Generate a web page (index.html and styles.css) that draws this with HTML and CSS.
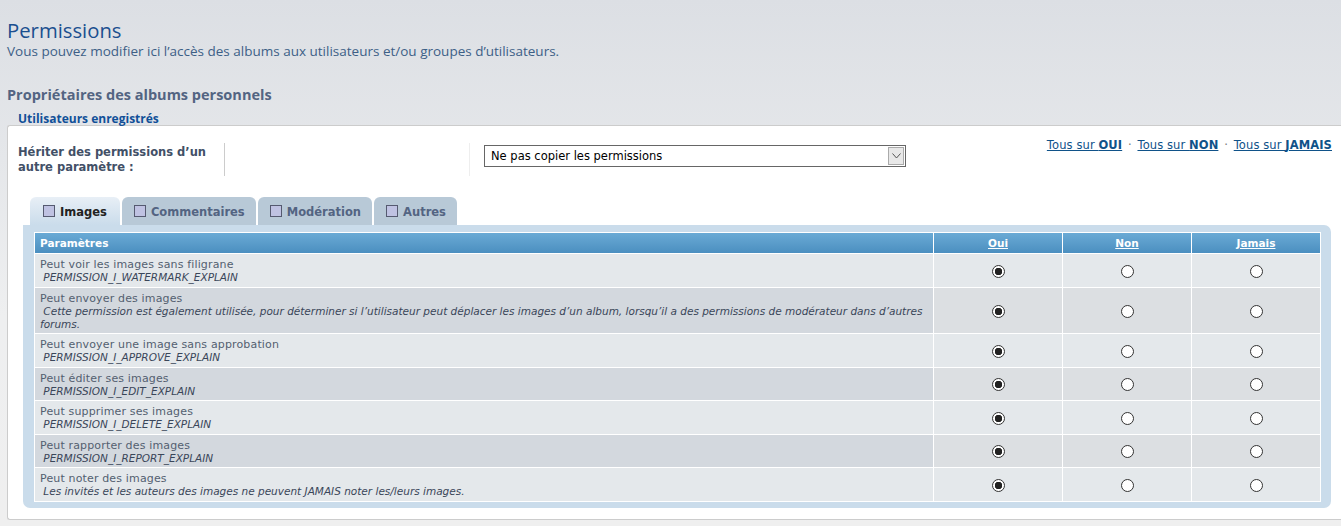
FILE: index.html
```html
<!DOCTYPE html>
<html>
<head>
    <title>Permissions</title>
    <link rel="stylesheet" href="styles.css">
</head>
<body>
    <h1>Permissions</h1>
    <p class="intro">Vous pouvez modifier ici l’accès des albums aux utilisateurs et/ou groupes d’utilisateurs.</p>

    <h2>Propriétaires des albums personnels</h2>
    <div class="legend">Utilisateurs enregistrés</div>

    <div class="panel">
        <div class="inherit">
            <div class="inherit-label">Hériter des permissions d’un autre paramètre :</div>
            <div class="inherit-field">
                <div class="select">
                    <span class="select-text">Ne pas copier les permissions</span>
                    <span class="select-arrow">
                        <svg width="9" height="6" viewBox="0 0 9 6"><path d="M0.5 0.5 L4.5 5 L8.5 0.5" fill="none" stroke="#555" stroke-width="1"/></svg>
                    </span>
                </div>
            </div>
            <div class="all-links">
                <a href="#">Tous sur <b>OUI</b></a> <span class="dot">·</span>
                <a href="#">Tous sur <b>NON</b></a> <span class="dot">·</span>
                <a href="#">Tous sur <b>JAMAIS</b></a>
            </div>
        </div>

        <ul class="tabs">
            <li class="tab active"><span class="box"></span>Images</li>
            <li class="tab"><span class="box"></span>Commentaires</li>
            <li class="tab"><span class="box"></span>Modération</li>
            <li class="tab"><span class="box"></span>Autres</li>
        </ul>

        <div class="tab-body">
            <table class="perms">
                <thead>
                    <tr>
                        <th class="param">Paramètres</th>
                        <th><a href="#">Oui</a></th>
                        <th><a href="#">Non</a></th>
                        <th><a href="#">Jamais</a></th>
                    </tr>
                </thead>
                <tbody>
                    <tr class="row1">
                        <td class="param">Peut voir les images sans filigrane<br><i>&nbsp;PERMISSION_I_WATERMARK_EXPLAIN</i></td>
                        <td><input type="radio" name="p1" checked></td>
                        <td><input type="radio" name="p1"></td>
                        <td><input type="radio" name="p1"></td>
                    </tr>
                    <tr class="row2">
                        <td class="param">Peut envoyer des images<br><i>&nbsp;Cette permission est également utilisée, pour déterminer si l’utilisateur peut déplacer les images d’un album, lorsqu’il a des permissions de modérateur dans d’autres forums.</i></td>
                        <td><input type="radio" name="p2" checked></td>
                        <td><input type="radio" name="p2"></td>
                        <td><input type="radio" name="p2"></td>
                    </tr>
                    <tr class="row1">
                        <td class="param">Peut envoyer une image sans approbation<br><i>&nbsp;PERMISSION_I_APPROVE_EXPLAIN</i></td>
                        <td><input type="radio" name="p3" checked></td>
                        <td><input type="radio" name="p3"></td>
                        <td><input type="radio" name="p3"></td>
                    </tr>
                    <tr class="row2">
                        <td class="param">Peut éditer ses images<br><i>&nbsp;PERMISSION_I_EDIT_EXPLAIN</i></td>
                        <td><input type="radio" name="p4" checked></td>
                        <td><input type="radio" name="p4"></td>
                        <td><input type="radio" name="p4"></td>
                    </tr>
                    <tr class="row1">
                        <td class="param">Peut supprimer ses images<br><i>&nbsp;PERMISSION_I_DELETE_EXPLAIN</i></td>
                        <td><input type="radio" name="p5" checked></td>
                        <td><input type="radio" name="p5"></td>
                        <td><input type="radio" name="p5"></td>
                    </tr>
                    <tr class="row2">
                        <td class="param">Peut rapporter des images<br><i>&nbsp;PERMISSION_I_REPORT_EXPLAIN</i></td>
                        <td><input type="radio" name="p6" checked></td>
                        <td><input type="radio" name="p6"></td>
                        <td><input type="radio" name="p6"></td>
                    </tr>
                    <tr class="row1">
                        <td class="param">Peut noter des images<br><i>&nbsp;Les invités et les auteurs des images ne peuvent JAMAIS noter les/leurs images.</i></td>
                        <td><input type="radio" name="p7" checked></td>
                        <td><input type="radio" name="p7"></td>
                        <td><input type="radio" name="p7"></td>
                    </tr>
                </tbody>
            </table>
        </div>
    </div>
</body>
</html>
```

FILE: styles.css
```css
html {
    overflow: hidden;
}
body {
    margin: 0;
    padding: 0 0 0 7px;
    height: 526px;
    background: linear-gradient(#dcdfe4, #eeeff0 60%, #efefef);
    font-family: "DejaVu Sans", Verdana, sans-serif;
    color: #536482;
}
h1 {
    font-family: "Open Sans", sans-serif;
    font-weight: normal;
    font-size: 20.3px;
    line-height: 26px;
    color: #1b4f8f;
    margin: 17px 0 0;
}
.intro {
    font-family: "Open Sans", sans-serif;
    font-size: 13.5px;
    line-height: 16px;
    color: #3d5f86;
    margin: 0;
}
h2 {
    font-family: "Open Sans", sans-serif;
    font-size: 14.5px;
    line-height: 18px;
    color: #536482;
    margin: 27px 0 0;
}
.legend {
    font-family: "Open Sans", sans-serif;
    font-weight: bold;
    font-size: 12px;
    line-height: 12px;
    color: #115098;
    margin: 9px 0 0 11px;
}
.panel {
    background: #fff;
    border: 1px solid #ccc;
    border-right: none;
    border-radius: 3px 0 0 3px;
    padding: 12px 9px 11px 10px;
}
.inherit {
    display: flex;
    align-items: flex-start;
}
.inherit-label {
    width: 196px;
    margin-top: 5px;
    padding: 2px 10px 1px 0;
    border-right: 1px solid #ccc;
    font-size: 11.5px;
    font-weight: bold;
    line-height: 15px;
    color: #425067;
}
.inherit-field {
    margin: 5px 0 0 244px;
    padding: 2px 0 9px 14px;
    border-left: 1px solid #eee;
}
.select {
    display: flex;
    align-items: center;
    width: 420px;
    height: 20px;
    border: 1px solid #666;
    background: #fff;
}
.select-text {
    flex: 1;
    padding-left: 6px;
    font-size: 11.5px;
    color: #000;
}
.select-arrow {
    width: 16px;
    height: 18px;
    margin-right: 1px;
    border: 1px solid #aaa;
    box-sizing: border-box;
    background: #e8e8e8;
    display: flex;
    align-items: center;
    justify-content: center;
}
.all-links {
    margin: 0 0 0 auto;
    font-size: 11.5px;
    letter-spacing: 0.1px;
    line-height: 14px;
}
.all-links a {
    color: #105289;
}
.all-links .dot {
    color: #777;
    margin: 0 2px;
}
.tabs {
    list-style: none;
    display: flex;
    gap: 2px;
    margin: 21px 0 0 12px;
    padding: 0;
}
.tab {
    display: flex;
    align-items: center;
    height: 28px;
    padding: 2px 11px 0 12px;
    box-sizing: border-box;
    border-radius: 6px 6px 0 0;
    background: #b8c9d7;
    font-size: 11.5px;
    font-weight: bold;
    color: #536482;
}
.tab.active {
    background: linear-gradient(#e8eff6, #cadceb);
    color: #222;
    padding: 2px 13px 0 13px;
}
.box {
    width: 10px;
    height: 10px;
    border: 1px solid #555a70;
    background: #bfc2e2;
    margin-right: 5px;
    margin-top: -3px;
}
.tab-body {
    background: #cadceb;
    border-radius: 0 7px 7px 7px;
    margin: 0 1px 0 5px;
    padding: 7px 10px 6px 11px;
}
.perms {
    width: 100%;
    border-collapse: separate;
    border-spacing: 1px;
    background: #fff;
    font-size: 11px;
    letter-spacing: 0.15px;
}
.perms th {
    height: 20px;
    padding: 0;
    background: linear-gradient(#6aaad5, #4b8fc0);
    color: #fff;
    font-weight: bold;
    font-size: 10.5px;
    letter-spacing: 0;
    text-align: center;
    width: 128px;
}
.perms th a {
    color: #fff;
}
.perms th.param {
    text-align: left;
    padding-left: 5px;
    width: auto;
}
.perms td {
    padding: 4px 5px 2.5px;
    line-height: 13px;
    text-align: center;
    vertical-align: middle;
}
.perms td.param {
    text-align: left;
    color: #535f70;
}
.perms td i {
    font-size: 10.5px;
    letter-spacing: 0;
    color: #3a4659;
}
.row1 td {
    background: #e4e8eb;
}
.row2 td {
    background: #dcdfe2;
}
.row2 td.param {
    background: #d3d8de;
}
input[type="radio"] {
    appearance: none;
    width: 13px;
    height: 13px;
    margin: 0;
    border: 1px solid #333;
    border-radius: 50%;
    background: #fff;
    vertical-align: middle;
}
input[type="radio"]:checked {
    background: radial-gradient(circle, #222 0, #222 3.5px, #fff 4px);
}
```
